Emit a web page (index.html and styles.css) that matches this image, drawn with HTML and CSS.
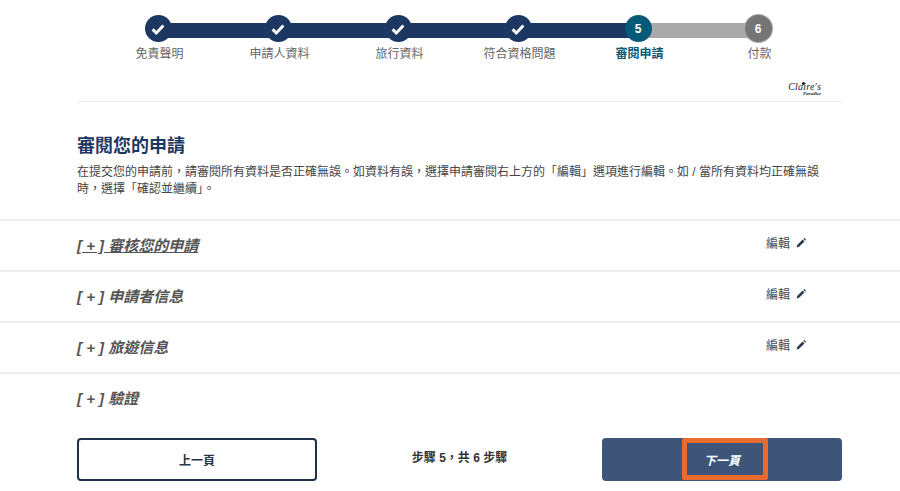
FILE: index.html
```html
<!DOCTYPE html>
<html lang="zh-Hant">
<head>
<meta charset="utf-8">
<title>審閱您的申請</title>
<link rel="stylesheet" href="styles.css">
</head>
<body>
<svg class="defs" width="0" height="0" aria-hidden="true">
  <symbol id="check" viewBox="0 0 14 14"><path d="M1.6 7.4 L5.3 11 L12.4 3.6" fill="none" stroke="#fff" stroke-width="2.9"/></symbol>
  <symbol id="pencil" viewBox="0 0 10 10"><path d="M0.6 9.4 L1.2 6.9 L6.6 1.5 L8.5 3.4 L3.1 8.8 Z M7.3 0.8 L7.9 0.3 Q8.3 0 8.7 0.3 L9.7 1.3 Q10 1.7 9.7 2.1 L9.2 2.7 Z" fill="#2b3a4f"/></symbol>
</svg>
<header class="wrap">
  <ol class="stepper">
    <li class="step done"><span class="dot"><svg class="tick"><use href="#check"/></svg></span><span class="label">免責聲明</span></li>
    <li class="step done"><span class="dot"><svg class="tick"><use href="#check"/></svg></span><span class="label">申請人資料</span></li>
    <li class="step done"><span class="dot"><svg class="tick"><use href="#check"/></svg></span><span class="label">旅行資料</span></li>
    <li class="step done"><span class="dot"><svg class="tick"><use href="#check"/></svg></span><span class="label">符合資格問題</span></li>
    <li class="step current"><span class="dot">5</span><span class="label">審閱申請</span></li>
    <li class="step todo"><span class="dot">6</span><span class="label">付款</span></li>
  </ol>
  <div class="brand-row">
    <div class="brand"><span class="brand-name">Claire's</span><span class="brand-sub">Paradise</span></div>
  </div>
</header>
<main>
  <section class="wrap intro">
    <h1>審閱您的申請</h1>
    <p>在提交您的申請前，請審閱所有資料是否正確無誤。如資料有誤，選擇申請審閱右上方的「編輯」選項進行編輯。如 / 當所有資料均正確無誤時，選擇「確認並繼續」。</p>
  </section>
  <section class="panels">
    <div class="panel"><div class="wrap panel-row"><a class="panel-title underlined">[ + ] 審核您的申請</a><a class="edit">編輯<svg class="pencil"><use href="#pencil"/></svg></a></div></div>
    <div class="panel"><div class="wrap panel-row"><a class="panel-title">[ + ] 申請者信息</a><a class="edit">編輯<svg class="pencil"><use href="#pencil"/></svg></a></div></div>
    <div class="panel"><div class="wrap panel-row"><a class="panel-title">[ + ] 旅遊信息</a><a class="edit">編輯<svg class="pencil"><use href="#pencil"/></svg></a></div></div>
    <div class="panel"><div class="wrap panel-row"><a class="panel-title">[ + ] 驗證</a></div></div>
  </section>
  <nav class="wrap actions">
    <a class="btn btn-prev">上一頁</a>
    <span class="progress">步驟 5，共 6 步驟</span>
    <a class="btn btn-next">下一頁<span class="highlight"></span></a>
  </nav>
</main>
</body>
</html>
```

FILE: styles.css
```css
* { box-sizing: border-box; }
html, body { margin: 0; padding: 0; }
body {
  width: 900px;
  height: 491px;
  overflow: hidden;
  background: #fff;
  color: #555;
  font-family: "Liberation Sans", "Noto Sans CJK TC", sans-serif;
  font-size: 12px;
}
.defs { position: absolute; }
.wrap { width: 765px; margin-left: 77px; }

.stepper {
  list-style: none;
  margin: 0 0 0 21px;
  padding: 15px 0 0;
  width: 720px;
  display: grid;
  grid-template-columns: repeat(6, 120px);
}
.step {
  position: relative;
  display: flex;
  flex-direction: column;
  align-items: center;
}
.step:not(:last-child)::after {
  content: "";
  position: absolute;
  top: 8px;
  left: 60px;
  width: 120px;
  height: 15px;
  background: #1d3763;
}
.step.current::after { background: #a9a9a9; }
.dot {
  position: relative;
  z-index: 1;
  width: 27px;
  height: 27px;
  border-radius: 50%;
  display: flex;
  align-items: center;
  justify-content: center;
  color: #fff;
  font-size: 12px;
  font-weight: 700;
  background: #1d3763;
}
.tick { width: 14px; height: 14px; }
.current .dot { background: #065a78; }
.todo .dot { background: #757575; box-shadow: 0 0 0 1px #a9a9a9; }
.label {
  margin: 4px 0 0 3px;
  line-height: 17px;
  color: #666;
  white-space: nowrap;
}
.current .label { color: #065a78; font-weight: 700; }

.brand-row {
  height: 39px;
  display: flex;
  justify-content: flex-end;
  align-items: flex-end;
  padding: 0 21px 5px 0;
  border-bottom: 1px solid #eee;
}
.brand {
  position: relative;
  display: flex;
  flex-direction: column;
  align-items: flex-end;
  color: #222;
  font-family: "Liberation Serif", serif;
  font-style: italic;
}
.brand::before {
  content: "";
  position: absolute;
  left: 14px;
  top: -1px;
  width: 3px;
  height: 3px;
  border-radius: 50%;
  background: #111;
}
.brand-name { font-size: 10px; line-height: 8px; letter-spacing: 0.2px; }
.brand-sub { font-size: 5px; line-height: 5px; font-weight: 700; }

.intro { height: 117px; padding-top: 33px; }
h1 {
  margin: 0;
  font-size: 18px;
  line-height: 22px;
  font-weight: 700;
  color: #1d3763;
}
.intro p {
  margin: 7px 0 0;
  width: 750px;
  font-size: 12px;
  line-height: 17px;
  color: #444;
}

.panel { height: 51px; border-top: 2px solid #eee; }
.panel-row {
  height: 49px;
  display: flex;
  justify-content: space-between;
  align-items: flex-start;
}
.panel-title {
  margin-top: 15px;
  font-size: 15px;
  line-height: 20px;
  font-weight: 700;
  font-style: italic;
  color: #555;
}
.underlined { text-decoration: underline; }
.edit {
  display: flex;
  align-items: center;
  gap: 6px;
  margin: 15px 36px 0 0;
  line-height: 17px;
  color: #3c4a5c;
}
.pencil { width: 10px; height: 10px; margin-top: -3px; }

.actions {
  display: grid;
  grid-template-columns: 240px 1fr 240px;
  align-items: center;
  margin-top: 15px;
}
.btn {
  position: relative;
  height: 43px;
  border-radius: 4px;
  display: flex;
  align-items: center;
  justify-content: center;
  font-size: 12px;
  font-weight: 700;
}
.btn-prev { border: 2px solid #1f3049; color: #26354b; }
.btn-next { background: #3e5579; color: #fff; font-style: italic; }
.highlight {
  position: absolute;
  left: 80px;
  top: 0;
  width: 86px;
  height: 42px;
  border: 5px solid #e96b2e;
  border-radius: 2px;
}
.progress {
  text-align: center;
  font-weight: 700;
  font-size: 12px;
  color: #333;
  margin-top: -6px;
}
```
